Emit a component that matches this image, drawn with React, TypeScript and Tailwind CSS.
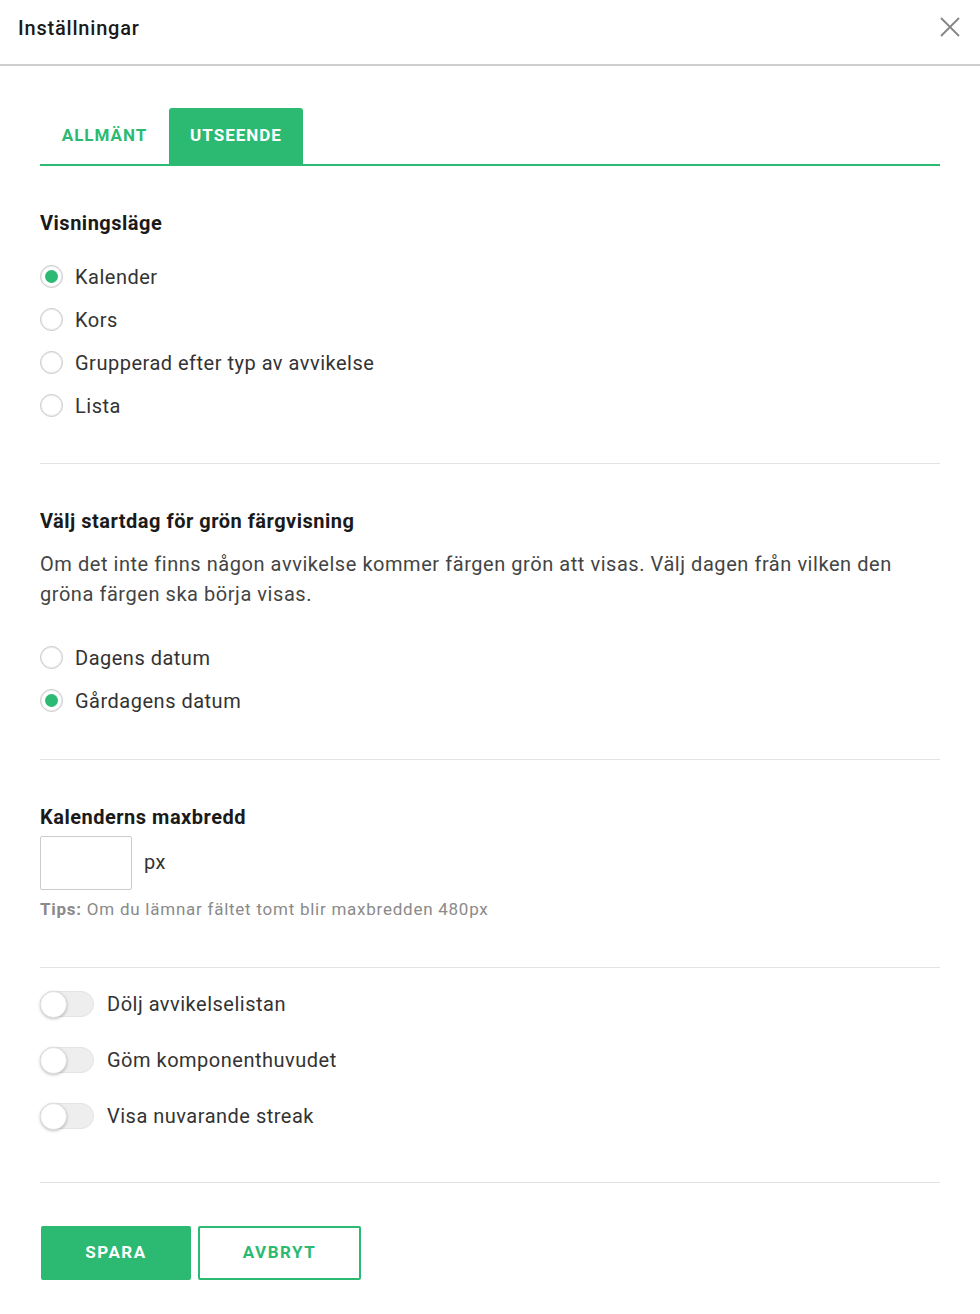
import React, { useState } from 'react';

function Radio({ label, checked, onClick }: { label: string; checked: boolean; onClick: () => void }) {
  return (
    <label className="flex items-center h-[43px] cursor-pointer" onClick={onClick}>
      <span className="w-[23px] h-[23px] rounded-full border border-[#c8c8c8] bg-white flex items-center justify-center shadow-[inset_0_0_0_1px_#eeeeee]">
        {checked && <span className="w-[13px] h-[13px] rounded-full bg-[#2cba72]" />}
      </span>
      <span className="ml-[12px] text-[20px] tracking-[0.5px] text-[#333333]">{label}</span>
    </label>
  );
}

function Toggle({ label, on, onClick }: { label: string; on: boolean; onClick: () => void }) {
  return (
    <div className="flex items-center h-[56px] cursor-pointer" onClick={onClick}>
      <span className="relative w-[54px] h-[26px] rounded-full bg-[#eeeeee] border border-[#e4e4e4]">
        <span
          className={
            on
              ? 'absolute top-[-1px] left-[27px] w-[27px] h-[27px] rounded-full bg-[#2cba72] shadow-[0_1px_3px_rgba(0,0,0,0.3)]'
              : 'absolute top-[-1px] left-[-1px] w-[27px] h-[27px] rounded-full bg-white border border-[#e0e0e0] shadow-[0_1px_3px_rgba(0,0,0,0.25)]'
          }
        />
      </span>
      <span className="ml-[13px] text-[20px] tracking-[0.5px] text-[#333333]">{label}</span>
    </div>
  );
}

export default function App() {
  const [tab, setTab] = useState('utseende');
  const [view, setView] = useState('Kalender');
  const [start, setStart] = useState('Gårdagens datum');
  const [toggles, setToggles] = useState<boolean[]>([false, false, false]);

  const views = ['Kalender', 'Kors', 'Grupperad efter typ av avvikelse', 'Lista'];
  const starts = ['Dagens datum', 'Gårdagens datum'];
  const toggleLabels = ['Dölj avvikelselistan', 'Göm komponenthuvudet', 'Visa nuvarande streak'];

  return (
    <div className="w-[980px] min-h-[1314px] bg-white font-['Roboto',sans-serif] text-[#222222]">
      {/* Header */}
      <div className="h-[66px] flex items-center justify-between pl-[18px] pr-[20px] border-b-2 border-[#cfcfcf]">
        <h1 className="text-[20px] font-medium text-[#1a1a1a] tracking-[0.8px] mt-[-8px]">Inställningar</h1>
        <button className="text-[#858585] mt-[-10px]">
          <svg width="20" height="20" viewBox="0 0 20 20" fill="none" stroke="currentColor" strokeWidth="1.8">
            <path d="M1 1L19 19M19 1L1 19" />
          </svg>
        </button>
      </div>

      <div className="px-[40px]">
        {/* Tabs */}
        <div className="mt-[42px] flex border-b-2 border-[#2cba72] h-[58px]">
          <button
            onClick={() => setTab('allmant')}
            className={
              tab === 'allmant'
                ? 'w-[129px] h-full rounded-t-[3px] bg-[#2cba72] text-white text-[17px] font-bold tracking-[1px]'
                : 'w-[129px] h-full text-[#2cba72] text-[17px] font-bold tracking-[1px]'
            }
          >
            ALLMÄNT
          </button>
          <button
            onClick={() => setTab('utseende')}
            className={
              tab === 'utseende'
                ? 'w-[134px] h-full rounded-t-[3px] bg-[#2cba72] text-white text-[17px] font-bold tracking-[1px]'
                : 'w-[134px] h-full text-[#2cba72] text-[17px] font-bold tracking-[1px]'
            }
          >
            UTSEENDE
          </button>
        </div>

        {/* Visningsläge */}
        <h2 className="mt-[42px] text-[20px] font-bold tracking-[0.5px] text-[#1a1a1a]">Visningsläge</h2>
        <div className="mt-[17px] flex flex-col">
          {views.map((v) => (
            <Radio key={v} label={v} checked={view === v} onClick={() => setView(v)} />
          ))}
        </div>

        <div className="mt-[36px] border-t border-[#e3e3e3]" />

        {/* Startdag */}
        <h2 className="mt-[42px] text-[20px] font-bold tracking-[0.5px] text-[#1a1a1a]">
          Välj startdag för grön färgvisning
        </h2>
        <p className="mt-[13px] text-[20px] leading-[30px] tracking-[0.55px] text-[#444444] pr-[30px]">
          Om det inte finns någon avvikelse kommer färgen grön att visas. Välj dagen från vilken den gröna färgen ska
          börja visas.
        </p>
        <div className="mt-[27px] flex flex-col">
          {starts.map((s) => (
            <Radio key={s} label={s} checked={start === s} onClick={() => setStart(s)} />
          ))}
        </div>

        <div className="mt-[37px] border-t border-[#e3e3e3]" />

        {/* Maxbredd */}
        <h2 className="mt-[42px] text-[20px] font-bold tracking-[0.5px] text-[#1a1a1a]">Kalenderns maxbredd</h2>
        <div className="mt-[4px] flex items-start">
          <input
            type="text"
            className="w-[92px] h-[54px] border border-[#cccccc] rounded-[2px] px-2 text-[18px] outline-none"
          />
          <span className="ml-[12px] mt-[11px] text-[20px] tracking-[0.5px] text-[#333333]">px</span>
        </div>
        <p className="mt-[7px] text-[17px] tracking-[0.75px] text-[#8a8a8a]">
          <span className="font-bold">Tips:</span> Om du lämnar fältet tomt blir maxbredden 480px
        </p>

        <div className="mt-[44px] border-t border-[#e3e3e3]" />

        {/* Toggles */}
        <div className="mt-[8px] flex flex-col">
          {toggleLabels.map((t, i) => (
            <Toggle
              key={t}
              label={t}
              on={toggles[i]}
              onClick={() => setToggles((prev) => prev.map((x, j) => (j === i ? !x : x)))}
            />
          ))}
        </div>

        <div className="mt-[38px] border-t border-[#e3e3e3]" />

        {/* Buttons */}
        <div className="mt-[43px] flex gap-[7px] pl-px">
          <button className="w-[150px] h-[54px] rounded-[2px] bg-[#2cba72] text-white text-[17px] font-bold tracking-[1.5px]">
            SPARA
          </button>
          <button className="w-[163px] h-[54px] rounded-[2px] border-2 border-[#2cba72] bg-white text-[#2cba72] text-[17px] font-bold tracking-[1.5px]">
            AVBRYT
          </button>
        </div>
      </div>
    </div>
  );
}
